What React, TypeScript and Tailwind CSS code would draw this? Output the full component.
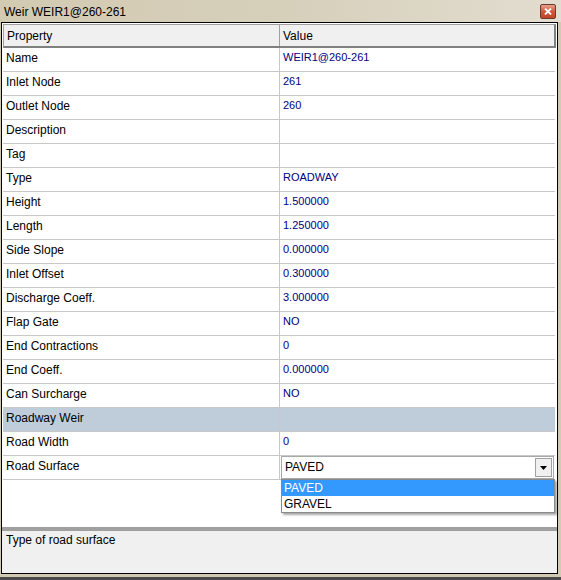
import React from 'react';

type Row = { label: string; value?: string; category?: boolean };

const rows: Row[] = [
    { label: 'Name', value: 'WEIR1@260-261' },
    { label: 'Inlet Node', value: '261' },
    { label: 'Outlet Node', value: '260' },
    { label: 'Description', value: '' },
    { label: 'Tag', value: '' },
    { label: 'Type', value: 'ROADWAY' },
    { label: 'Height', value: '1.500000' },
    { label: 'Length', value: '1.250000' },
    { label: 'Side Slope', value: '0.000000' },
    { label: 'Inlet Offset', value: '0.300000' },
    { label: 'Discharge Coeff.', value: '3.000000' },
    { label: 'Flap Gate', value: 'NO' },
    { label: 'End Contractions', value: '0' },
    { label: 'End Coeff.', value: '0.000000' },
    { label: 'Can Surcharge', value: 'NO' },
    { label: 'Roadway Weir', category: true },
    { label: 'Road Width', value: '0' },
];

function CloseButton() {
    return (
        <div className="w-[16px] h-[15px] rounded-[2px] border border-[#6e3a2c] bg-gradient-to-b from-[#e8a08c] via-[#d0573b] to-[#c0452a] flex items-center justify-center">
            <svg width="8" height="7" viewBox="0 0 8 7">
                <path d="M1 0.5 L7 6.5 M7 0.5 L1 6.5" stroke="white" strokeWidth="1.8" />
            </svg>
        </div>
    );
}

export default function App() {
    return (
        <div className="w-[561px] h-[580px] overflow-hidden flex flex-col bg-[#d3cab2] font-['Liberation_Sans',Arial,sans-serif] text-[12px] text-black">
            {/* Title bar */}
            <div className="h-[22px] shrink-0 flex items-center justify-between pl-[4px] pr-[5px] pt-[1px] bg-gradient-to-r from-[#d3cab2] via-[#d6cfba] to-[#e2ddd0]">
                <span className="text-[12px] leading-none">Weir WEIR1@260-261</span>
                <CloseButton />
            </div>

            {/* Window body */}
            <div className="ml-[1px] w-[557px] h-[552px] shrink-0 border border-black bg-[#f0f0f0] flex flex-col">
                {/* Property grid */}
                <div className="h-[504px] shrink-0 bg-white pt-[1px] pl-[1px] relative">
                    {/* Header */}
                    <div className="h-[24px] w-[553px] flex bg-[#f0f0f0] border-t border-l border-[#a0a0a0] border-r-2 border-b-2 border-r-[#808080] border-b-[#808080]">
                        <div className="w-[276px] border-r border-[#a0a0a0] flex items-center pl-[3px] pt-[1px]">Property</div>
                        <div className="flex-1 flex items-center pl-[3px] pt-[1px]">Value</div>
                    </div>

                    {rows.map((r) => (
                        <div
                            key={r.label}
                            className={`h-[24px] w-[552px] flex border-b border-[#c8c8c8] ${r.category ? 'bg-[#bfcddb]' : ''}`}
                        >
                            <div className="w-[277px] shrink-0 border-r border-[#c8c8c8] flex items-center pl-[3px] pb-[4px]">{r.label}</div>
                            <div className="flex-1 flex items-center pl-[3px] pb-[4px] text-[11px] text-[#000080]">{r.value}</div>
                        </div>
                    ))}

                    {/* Road Surface row with open combo */}
                    <div className="h-[24px] w-[552px] flex border-b border-[#c8c8c8]">
                        <div className="w-[277px] shrink-0 border-r border-[#c8c8c8] flex items-center pl-[3px] pb-[4px]">Road Surface</div>
                        <div className="flex-1 relative">
                            <div className="ml-[1px] w-[273px] h-[23px] border border-[#a8a8a8] bg-white flex items-center justify-between pl-[3px] pr-[1px]">
                                <span className="text-[12px] pb-[1px]">PAVED</span>
                                <div className="w-[17px] h-[19px] border border-[#a0a0a0] bg-[#f0f0f0] flex items-center justify-center">
                                    <svg width="7" height="4" viewBox="0 0 7 4">
                                        <path d="M0 0 H7 L3.5 4 Z" fill="black" />
                                    </svg>
                                </div>
                            </div>
                            {/* Dropdown list */}
                            <div className="absolute left-[1px] top-[23px] w-[274px] border border-[#8a8a8a] bg-white shadow-[2px_2px_2px_rgba(0,0,0,0.35)] z-10">
                                <div className="h-[16px] bg-[#3399ff] text-white flex items-center pl-[2px] pb-[1px]">PAVED</div>
                                <div className="h-[16px] flex items-center pl-[2px] pb-[1px]">GRAVEL</div>
                            </div>
                        </div>
                    </div>
                </div>

                {/* Splitter */}
                <div className="h-[4px] shrink-0 bg-[#a0a0a0]" />

                {/* Description */}
                <div className="flex-1 pl-[4px]">Type of road surface</div>
            </div>

            {/* Bottom edge */}
            <div className="h-[3px] shrink-0 bg-[#d3cab2]" />
            <div className="h-[3px] shrink-0 bg-[#4a4a4a]" />
        </div>
    );
}
